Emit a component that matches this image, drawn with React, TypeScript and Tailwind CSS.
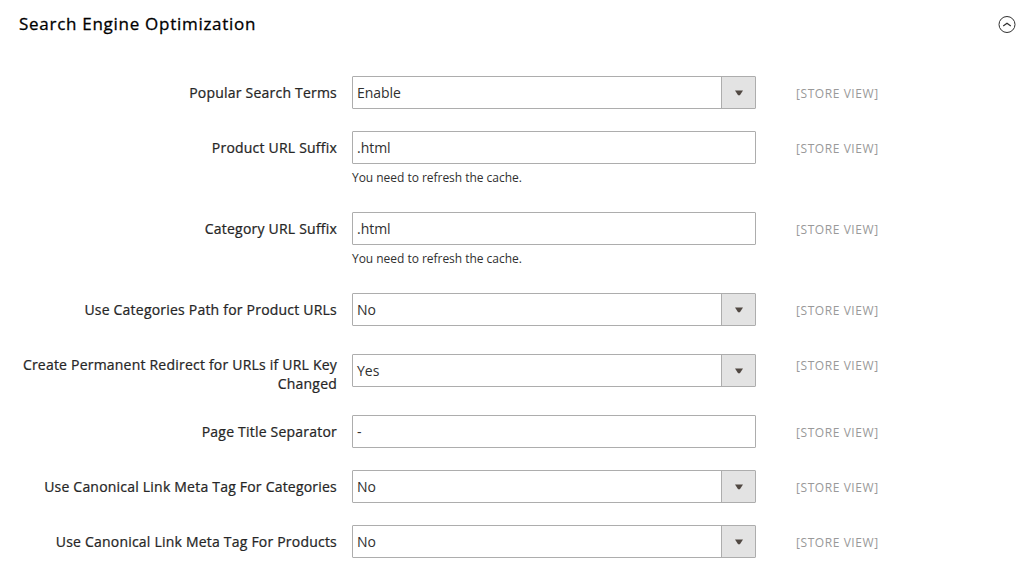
type Field = { label: string; value: string; select?: boolean; note?: string; row: string; offset?: string };

const fields: Field[] = [
  { label: 'Popular Search Terms', value: 'Enable', select: true, row: 'h-[55px]' },
  { label: 'Product URL Suffix', value: '.html', note: 'You need to refresh the cache.', row: 'h-[81px]' },
  { label: 'Category URL Suffix', value: '.html', note: 'You need to refresh the cache.', row: 'h-[81px]' },
  { label: 'Use Categories Path for Product URLs', value: 'No', select: true, row: 'h-[55px]' },
  { label: 'Create Permanent Redirect for URLs if URL Key Changed', value: 'Yes', select: true, row: 'h-[67px]', offset: 'mt-[6px]' },
  { label: 'Page Title Separator', value: '-', row: 'h-[55px]' },
  { label: 'Use Canonical Link Meta Tag For Categories', value: 'No', select: true, row: 'h-[55px]' },
  { label: 'Use Canonical Link Meta Tag For Products', value: 'No', select: true, row: 'h-[48px]' },
];

function Row({ label, value, select, note, row, offset = '' }: Field) {
  return (
    <div className={`flex shrink-0 ${row}`}>
      <div className="w-[337px] shrink-0 pt-[7px] pl-4 text-right text-[14px] leading-[19px] font-normal tracking-[0.21px] text-[#262626] [-webkit-text-stroke:0.24px_#262626]">{label}</div>
      <div className="ml-[15px] w-[404px] shrink-0">
        <div className={`flex h-[33px] rounded-[1px] border border-[#adadad] bg-white ${offset}`}>
          <div className="flex-1 pl-1 text-[14px] leading-[31px] tracking-[-0.03px] text-[#303030]">{value}</div>
          {select && (
            <div className="flex w-[34px] items-center justify-center border-l border-[#adadad] bg-[#e3e3e3]">
              <svg width="8" height="6" viewBox="0 0 8 6"><path d="M0 .5h8L4.9 5.2H3.1z" fill="#514943" /></svg>
            </div>
          )}
        </div>
        {note && <p className="mt-[6px] text-[12px] leading-[16px] tracking-[-0.03px] text-[#303030]">{note}</p>}
      </div>
      <div className="ml-10 pt-[9px] text-[12px] leading-[17px] tracking-[0.57px] whitespace-nowrap text-[#999999]">[STORE VIEW]</div>
    </div>
  );
}

export default function App() {
  return (
    <main className="flex h-[573px] w-[1030px] flex-col overflow-hidden bg-white font-['Open_Sans','Noto_Sans',sans-serif]">
      <header className="flex h-[76px] shrink-0 items-start justify-between pt-[12px] pr-[14px] pl-[19px]">
        <h1 className="text-[17px] leading-[24px] font-normal tracking-[0.72px] text-black [-webkit-text-stroke:0.3px_#000]">Search Engine Optimization</h1>
        <svg className="mt-[3px]" width="18" height="18" viewBox="0 0 18 18" fill="none" stroke="#303030">
          <circle cx="9" cy="9.5" r="8" /><path d="m5.2 11 3.8-2.8 3.8 2.8" strokeWidth="1.2" />
        </svg>
      </header>
      {fields.map((f) => <Row key={f.label} {...f} />)}
    </main>
  );
}
